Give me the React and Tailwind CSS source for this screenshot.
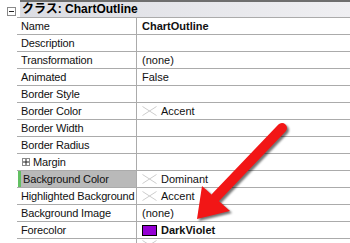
import React from 'react';

const rows = [
  { label: 'Name', value: 'ChartOutline', bold: true },
  { label: 'Description' },
  { label: 'Transformation', value: '(none)' },
  { label: 'Animated', value: 'False' },
  { label: 'Border Style' },
  { label: 'Border Color', value: 'Accent', swatch: 'x' },
  { label: 'Border Width' },
  { label: 'Border Radius' },
  { label: 'Margin', expand: true },
  { label: 'Background Color', value: 'Dominant', swatch: 'x', selected: true },
  { label: 'Highlighted Background', value: 'Accent', swatch: 'x' },
  { label: 'Background Image', value: '(none)' },
  { label: 'Forecolor', value: 'DarkViolet', bold: true, swatch: 'violet' },
  { label: '', swatch: 'x', last: true },
];

const EmptySwatch = () => (
  <svg width="15" height="10" viewBox="0 0 15 10" className="shrink-0">
    <path d="M0.5 0.5 L14.5 9.5 M0.5 9.5 L14.5 0.5" stroke="#cdcdcd" strokeWidth="1" fill="none" />
  </svg>
);

const Row = ({ row }) => (
  <div className="flex h-[17px] ml-[17px] border-t border-[#ababab]">
    <div className="w-[120px] shrink-0 border-r border-[#ababab] flex items-center tracking-[-0.15px]">
      {row.selected ? (
        <div className="ml-[1px] h-full flex-1 flex items-center bg-[#b9b9b9]">
          <div className="w-[3px] h-full bg-[#62c062]" />
          <span className="ml-[2px] whitespace-nowrap">{row.label}</span>
        </div>
      ) : row.expand ? (
        <div className="flex items-center">
          <div className="ml-[5px] w-[8px] h-[8px] border border-[#8a8a8a] flex items-center justify-center">
            <svg width="6" height="6" viewBox="0 0 6 6">
              <path d="M0 3 H6 M3 0 V6" stroke="#222" strokeWidth="1" />
            </svg>
          </div>
          <span className="ml-[3px] whitespace-nowrap">{row.label}</span>
        </div>
      ) : (
        <span className="ml-[4px] whitespace-nowrap">{row.label}</span>
      )}
    </div>
    <div className={'flex-1 flex pl-[5px] whitespace-nowrap ' + (row.last ? 'items-start pt-[1px]' : 'items-center')}>
      {row.swatch === 'x' && <EmptySwatch />}
      {row.swatch === 'violet' && (
        <div className="w-[15px] h-[11px] border border-black bg-[#9400d3] shrink-0" />
      )}
      {row.value && (
        <span className={(row.swatch ? 'ml-[4px] ' : '') + (row.bold ? 'font-bold' : '')}>
          {row.value}
        </span>
      )}
    </div>
  </div>
);

export default function App() {
  return (
    <div
      className="relative w-[350px] h-[243px] overflow-hidden bg-white text-[11px] leading-[16px] text-[#111]"
      style={{ fontFamily: '"Liberation Sans", "Noto Sans CJK JP", sans-serif' }}
    >
      <div className="flex h-[17px]">
        <div className="w-[20px] shrink-0 flex items-end pb-[1px]">
          <div className="ml-[7px] w-[9px] h-[9px] border border-[#8a8a8a] bg-white flex items-center justify-center">
            <svg width="5" height="1" viewBox="0 0 5 1">
              <path d="M0 0.5 H5" stroke="#222" strokeWidth="1" />
            </svg>
          </div>
        </div>
        <div className="flex-1 flex items-end border-t-2 border-[#6e6e6e] bg-gradient-to-r from-[#dcdde3] to-[#efeff2] pl-[2px] text-[12px] font-bold text-black leading-[15px]">
          クラス: ChartOutline
        </div>
      </div>
      {rows.map((row, i) => (
        <Row key={i} row={row} />
      ))}

      <svg
        className="absolute inset-0 pointer-events-none drop-shadow-[2px_2px_1px_rgba(0,0,0,0.55)]"
        width="350"
        height="243"
        viewBox="0 0 350 243"
      >
        <line x1="282" y1="128" x2="216" y2="197" stroke="#f21616" strokeWidth="10" strokeLinecap="round" />
        <polygon points="197,219 202,186 230,211" fill="#f21616" />
      </svg>
    </div>
  );
}
